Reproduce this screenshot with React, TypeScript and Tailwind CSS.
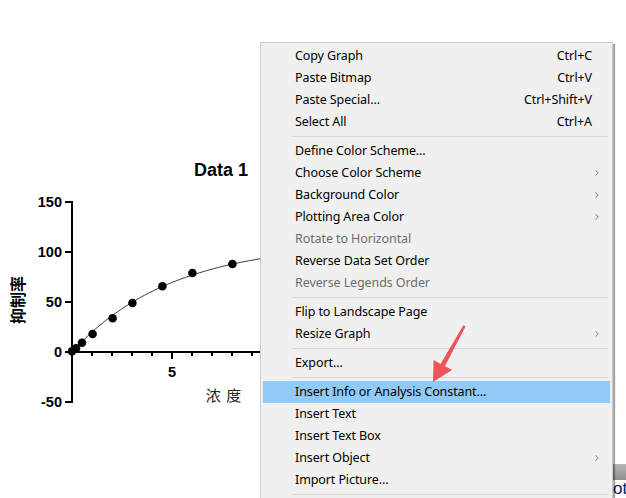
import { ChevronRight } from 'lucide-react';

type MenuItem =
  | { kind: 'sep' }
  | {
      kind: 'item';
      label: string;
      shortcut?: string;
      submenu?: boolean;
      disabled?: boolean;
      active?: boolean;
    };

const items: MenuItem[] = [
  { kind: 'item', label: 'Copy Graph', shortcut: 'Ctrl+C' },
  { kind: 'item', label: 'Paste Bitmap', shortcut: 'Ctrl+V' },
  { kind: 'item', label: 'Paste Special...', shortcut: 'Ctrl+Shift+V' },
  { kind: 'item', label: 'Select All', shortcut: 'Ctrl+A' },
  { kind: 'sep' },
  { kind: 'item', label: 'Define Color Scheme...' },
  { kind: 'item', label: 'Choose Color Scheme', submenu: true },
  { kind: 'item', label: 'Background Color', submenu: true },
  { kind: 'item', label: 'Plotting Area Color', submenu: true },
  { kind: 'item', label: 'Rotate to Horizontal', disabled: true },
  { kind: 'item', label: 'Reverse Data Set Order' },
  { kind: 'item', label: 'Reverse Legends Order', disabled: true },
  { kind: 'sep' },
  { kind: 'item', label: 'Flip to Landscape Page' },
  { kind: 'item', label: 'Resize Graph', submenu: true },
  { kind: 'sep' },
  { kind: 'item', label: 'Export...' },
  { kind: 'sep' },
  { kind: 'item', label: 'Insert Info or Analysis Constant...', active: true },
  { kind: 'item', label: 'Insert Text' },
  { kind: 'item', label: 'Insert Text Box' },
  { kind: 'item', label: 'Insert Object', submenu: true },
  { kind: 'item', label: 'Import Picture...' },
  { kind: 'sep' },
];

// dose-response fit drawn through the points
const fit = (x: number) => 110 * (1 - Math.exp(-0.2 * x));
const px = (x: number) => 72 + x * 20;
const py = (y: number) => 352 - y;

const points: [number, number][] = [
  [0, 0.7],
  [0.2, 3.7],
  [0.5, 9.3],
  [1.03, 18],
  [2.03, 33.7],
  [3.02, 49],
  [4.52, 65.7],
  [6.02, 79],
  [8.02, 88],
];

function Chart() {
  const curve = Array.from({ length: 120 }, (_, i) => {
    const x = (i / 119) * 10;
    return `${i === 0 ? 'M' : 'L'}${px(x).toFixed(1)},${py(fit(x)).toFixed(1)}`;
  }).join(' ');

  const minor = [1, 2, 3, 4, 6, 7, 8, 9];
  return (
    <svg width="300" height="498" className="block">
      <text x="221" y="176" textAnchor="middle" fontFamily="Liberation Sans, Arial, sans-serif" fontWeight="bold" fontSize="18">
        Data 1
      </text>
      {/* y axis */}
      <line x1="72" y1="201" x2="72" y2="403" stroke="#000" strokeWidth="2" />
      {[150, 100, 50, 0, -50].map((v) => (
        <g key={v}>
          <line x1="65" y1={py(v)} x2="72" y2={py(v)} stroke="#000" strokeWidth="2" />
          <text x="62" y={py(v) + 5} textAnchor="end" fontFamily="Liberation Sans, Arial, sans-serif" fontWeight="bold" fontSize="14.5">
            {v}
          </text>
        </g>
      ))}
      {/* x axis */}
      <line x1="71" y1="352" x2="300" y2="352" stroke="#000" strokeWidth="2" />
      {minor.map((v) => (
        <line key={v} x1={px(v)} y1="352" x2={px(v)} y2="356" stroke="#000" strokeWidth="2" />
      ))}
      <line x1={px(5)} y1="352" x2={px(5)} y2="359" stroke="#000" strokeWidth="2" />
      <text x={px(5)} y="377" textAnchor="middle" fontFamily="Liberation Sans, Arial, sans-serif" fontWeight="bold" fontSize="14.5">
        5
      </text>
      <text x="224" y="401" textAnchor="middle" fontFamily="'Noto Sans CJK SC', sans-serif" fontSize="15" fill="#222" letterSpacing="1">
        浓 度
      </text>
      <text
        x="0"
        y="0"
        transform="translate(24 300) rotate(-90)"
        textAnchor="middle"
        fontFamily="'Noto Sans CJK SC', sans-serif"
        fontWeight="bold"
        fontSize="16"
      >
        抑制率
      </text>
      <path d={curve} fill="none" stroke="#333" strokeWidth="1" />
      {points.map(([x, y], i) => (
        <circle key={i} cx={px(x)} cy={py(y)} r="4.3" fill="#000" />
      ))}
    </svg>
  );
}

function ContextMenu() {
  return (
    <div
      className="absolute left-[260px] top-[42px] w-[353px] border border-[#cccccc] bg-[#f0f0f0] px-[2px] pt-[2px] pb-[30px] shadow-[2px_2px_1px_rgba(0,0,0,0.35)]"
      style={{ fontFamily: "'Noto Sans', 'Microsoft YaHei', sans-serif" }}
    >
      {items.map((it, i) =>
        it.kind === 'sep' ? (
          <div key={i} className="flex h-[7px] items-center pl-[29px] pr-[2px]">
            <div className="h-px w-full bg-[#d7d7d7]" />
          </div>
        ) : (
          <div
            key={i}
            className={`flex h-[22px] items-center pl-[32px] pr-[18px] text-[12.5px] tracking-[-0.1px] ${
              it.active ? 'bg-[#91c9f7]' : ''
            } ${it.disabled ? 'text-[#6d6d6d]' : 'text-black'}`}
          >
            <span className="flex-1 whitespace-nowrap">{it.label}</span>
            {it.shortcut && <span className="whitespace-nowrap">{it.shortcut}</span>}
            {it.submenu && <ChevronRight className="-mr-[10px] h-[10px] w-[10px] text-[#333]" strokeWidth={1.5} />}
          </div>
        )
      )}
    </div>
  );
}

function Pointer() {
  // red annotation arrow pointing at the highlighted entry
  return (
    <svg className="absolute left-0 top-0" width="626" height="498">
      <path d="M463.5,325 L465.5,326.5 L445,366 L452,370 L433,382 L433.5,360 L440.5,364 Z" fill="#f0525a" />
    </svg>
  );
}

export default function App() {
  return (
    <div className="relative h-[498px] w-[626px] overflow-hidden bg-white">
      <Chart />
      {/* part of the window behind the menu */}
      <div className="absolute left-[613px] top-[464px] h-[16px] w-[13px] bg-gradient-to-b from-[#b8b8b8] to-[#8f8f8f]" />
      <div className="absolute left-[613px] top-[479px] text-[17px] leading-[19px] text-[#0a1a5a]" style={{ fontFamily: "'Liberation Sans', sans-serif" }}>
        ot
      </div>
      <ContextMenu />
      <Pointer />
    </div>
  );
}
